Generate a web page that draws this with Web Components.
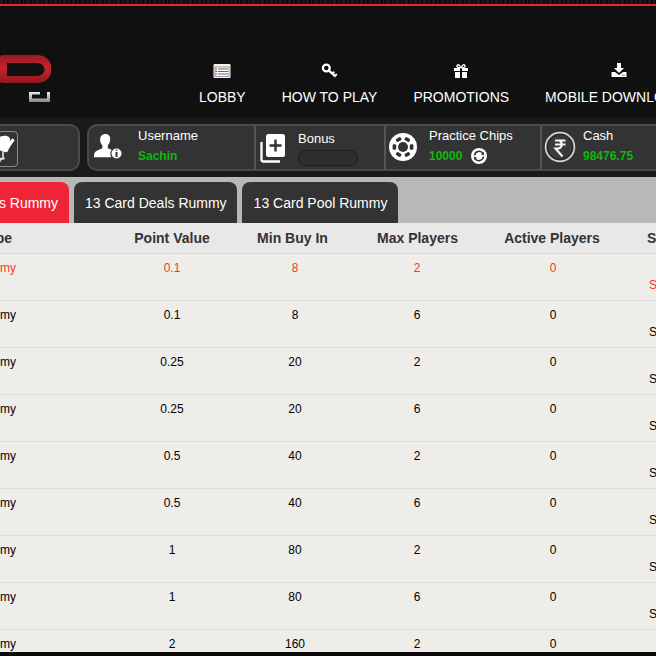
<!DOCTYPE html>
<html lang="en">
<head>
<meta charset="utf-8">
<title>Rummy Lobby</title>
<style>
html,body{margin:0;padding:0;background:#0a0a0a}
body{width:656px;height:656px;overflow:hidden;font-family:"Liberation Sans",Arial,sans-serif}
lobby-page{width:656px;height:656px}
</style>
</head>
<body>
<lobby-page>
  <top-bar slot="top">
    <nav-item label="LOBBY" icon="lobby"></nav-item>
    <nav-item label="HOW TO PLAY" icon="key"></nav-item>
    <nav-item label="PROMOTIONS" icon="gift"></nav-item>
    <nav-item label="MOBILE DOWNLOAD" icon="download" nudge="9"></nav-item>
  </top-bar>
  <status-bar slot="status">
    <status-cell w="167" label="Username" value="Sachin" icon="user"></status-cell>
    <status-cell w="130" label="Bonus" icon="plus" pill></status-cell>
    <status-cell w="156" label="Practice Chips" value="10000" icon="chip" refresh></status-cell>
    <status-cell w="130" label="Cash" value="98476.75" icon="rupee"></status-cell>
  </status-bar>
  <tab-strip slot="tabs">
    <game-tab active>Points Rummy</game-tab>
    <game-tab>13 Card Deals Rummy</game-tab>
    <game-tab>13 Card Pool Rummy</game-tab>
  </tab-strip>
  <lobby-table slot="table"></lobby-table>
</lobby-page>
<script>
const chipBlobs = [30,90,150,210,270,330].map(a => `<rect x="12.3" y="4.6" width="5.4" height="3.6" rx="1.2" transform="rotate(${a} 15 15)"/>`).join('');
const ICONS = {
  lobby:`<svg width="18" height="16" viewBox="0 0 18 16"><rect x="0.5" y="1" width="17" height="14" rx="1" fill="#fbf3df"/><rect x="2" y="4" width="14" height="9.5" fill="#fff" stroke="#5b5478" stroke-width=".6"/><path d="M5 6h10M5 8.500h10M5 11h10" stroke="#6b6080" stroke-width="1.200"/><path d="M2.500 6h1.500M2.500 8.500h1.500M2.500 11h1.500" stroke="#8a2f55" stroke-width="1.200"/></svg>`,
  key:`<svg width="18" height="16" viewBox="0 0 18 16"><circle cx="5.300" cy="5" r="3.400" fill="none" stroke="#fff" stroke-width="2.300"/><path d="M7.600 7.400l7.200 6.200" stroke="#fff" stroke-width="2.400"/><path d="M11.500 10.500l1.800-1.800M14 12.800l1.800-1.800" stroke="#fff" stroke-width="1.800"/></svg>`,
  gift:`<svg width="16" height="16" viewBox="0 0 16 16"><path d="M1 5h6v3H1zM9 5h6v3H9zM2 9h5v6H2zM9 9h5v6H9z" fill="#fff"/><path d="M7.600 4.600C4.500 5 3.600 3.800 4 2.600 4.600 1 6.800 1.600 7.600 4.600zM8.400 4.600c3.100.4 4-.8 3.600-2C11.400 1 9.200 1.600 8.400 4.600z" fill="none" stroke="#fff" stroke-width="1.300"/></svg>`,
  download:`<svg width="16" height="16" viewBox="0 0 16 16"><path d="M6 0h4v5h3l-5 5-5-5h3z" fill="#fff"/><path d="M0.500 9h3.500l4 3 4-3h3.500v5H.5z" fill="#fff"/><path d="M11 12.300h3" stroke="#777" stroke-width="1"/></svg>`,
  user:`<svg width="30" height="28" viewBox="0 0 30 28"><path d="M12.500 2c3.400 0 5 2.700 4.700 5.700-.2 2.500-1.200 4.500-2.400 5.600v3c1.200.6 2.700 1.100 4 1.700-1 1-1.600 2.500-1.500 4.300.04 1.100.4 2 1 3H1c0-3.400.4-5.200 2.300-6.300 2-1.100 4.200-1.600 6-2.700v-3c-1.300-1.200-2-3.200-2.200-5.300C6.800 4.700 9 2 12.500 2z" fill="#fff"/><circle cx="23.500" cy="21.500" r="5" fill="#fff"/><path d="M23.500 20v5" stroke="#333" stroke-width="2"/><path d="M23.500 17.600v1.300" stroke="#333" stroke-width="1.600"/></svg>`,
  plus:`<svg width="26" height="30" viewBox="0 0 26 30"><path d="M1.500 9v17.500a2 2 0 0 0 2 2H20" fill="none" stroke="#fff" stroke-width="2.300"/><rect x="6" y="1" width="19" height="23" rx="2.500" fill="#fff"/><path d="M15.500 6.500v12M9.500 12.500h12" stroke="#333" stroke-width="2.400"/></svg>`,
  chip:`<svg width="30" height="30" viewBox="0 0 30 30"><circle cx="15" cy="15" r="14" fill="#fff"/><g fill="#333">${chipBlobs}</g><circle cx="15" cy="15" r="5" fill="#333"/></svg>`,
  rupee:`<svg width="32" height="32" viewBox="0 0 32 32"><circle cx="16" cy="16" r="14.400" fill="#3a3a3a" stroke="#d4d4d4" stroke-width="1.700"/><circle cx="16" cy="16" r="12.600" fill="none" stroke="#222" stroke-width="1"/><path d="M11 9.500h10.500M11 13.500h10.500M11 9.500h3c5 0 5 8 -.5 8H11.500l7 8" fill="none" stroke="#f6f6f6" stroke-width="2.100"/></svg>`,
  refresh:`<svg width="16" height="16" viewBox="0 0 16 16"><circle cx="8" cy="8" r="8" fill="#fff"/><path d="M3.500 7.500A4.600 4.600 0 0 1 12 5.600" fill="none" stroke="#333" stroke-width="1.500"/><path d="M12.500 8.500A4.600 4.600 0 0 1 4 10.400" fill="none" stroke="#333" stroke-width="1.500"/><path d="M13.300 7.200l-3.300-.6 2.700-2.700zM2.700 8.800l3.300.6-2.700 2.700z" fill="#333"/></svg>`
};

function define(name, css, html, extra = {}) {
  const tpl = document.createElement('template');
  tpl.innerHTML = `<style>${css}</style>${html}`;
  customElements.define(name, class extends HTMLElement {
    constructor() {
      super();
      this.attachShadow({ mode: 'open' }).appendChild(tpl.content.cloneNode(true));
    }
    connectedCallback() { if (extra.init) extra.init(this, this.shadowRoot); }
  });
}

define('lobby-page',
  `:host{display:flex;flex-direction:column;overflow:hidden;color:#000;font-family:"Liberation Sans",Arial,sans-serif}
   .strip{height:4px;flex:none;background:repeating-linear-gradient(90deg,#1a1a1a 0 3px,#0c0c0c 3px 5px,#222 5px 6px,#101010 6px 9px)}
   .rule{height:2px;flex:none;background:#ed2533}
   .table{flex:1;min-height:0;display:block;overflow:hidden}
   .foot{height:4px;flex:none;background:#0b0b0b}`,
  `<div class="strip"></div><div class="rule"></div>
   <slot name="top"></slot><slot name="status"></slot><slot name="tabs"></slot>
   <div class="table"><slot name="table"></slot></div><div class="foot"></div>`);

define('top-bar',
  `:host{display:flex;height:111px;flex:none;background:#101010;overflow:hidden}
   svg{display:block;flex:none;margin-top:49px}
   nav{display:flex;gap:36px;margin-left:148px;padding-top:57px;white-space:nowrap}`,
  `<svg width="51" height="48" viewBox="0 0 51 48">
     <defs><linearGradient id="r" x1="0" y1="0" x2="0" y2="1"><stop offset="0" stop-color="#9d1a22"/><stop offset=".5" stop-color="#c4232c"/><stop offset="1" stop-color="#8f171e"/></linearGradient>
     <linearGradient id="g" x1="0" y1="0" x2="0" y2="1"><stop offset="0" stop-color="#eee"/><stop offset="1" stop-color="#888"/></linearGradient></defs>
     <path fill-rule="evenodd" fill="url(#r)" d="M3 0H37C46 0 51.500 6 51.500 14S46 28 37 28H3C1 28 0 27 0 27V1C0 1 1 0 3 0ZM7 8V21H37C41.500 21 44.500 18 44.500 14.500S41.500 8 37 8Z"/>
     <path fill="url(#g)" d="M29 37h11v2.500H32V43.500h15V37h3v10H29z"/>
   </svg><nav><slot></slot></nav>`);

define('nav-item',
  `:host{display:flex;flex-direction:column;align-items:center;color:#fff;font-size:14px}
   .i{height:16px;display:flex;justify-content:center}
   .l{line-height:16px;margin-top:10px}`,
  `<div class="i"></div><div class="l"></div>`,
  { init(el, r) {
      const i = r.querySelector('.i');
      i.innerHTML = ICONS[el.getAttribute('icon')];
      if (el.hasAttribute('nudge')) i.style.paddingLeft = el.getAttribute('nudge') + 'px';
      r.querySelector('.l').textContent = el.getAttribute('label');
  } });

define('status-bar',
  `:host{display:flex;height:60px;flex:none;background:#1a1a1a;box-sizing:border-box;padding-top:7px;gap:7px;margin-left:-40px;width:696px;overflow:hidden}
   .card{box-sizing:border-box;height:47px;background:#333;border:2px solid #4a4a4a;border-radius:10px;flex:none}
   .first{width:120px;display:flex;justify-content:flex-end;padding:5px 60px 0 0}
   .box{width:30px;height:36px;border:1px solid #8a8a8a;border-radius:4px;box-sizing:border-box;display:block}
   .rest{flex:1;min-width:0;display:flex;border-right:0;border-radius:10px 0 0 10px;width:600px}`,
  `<div class="card first"><svg class="box" viewBox="0 0 30 36"><path d="M6 9c4-5 13-7 16-3 1 1.500 1 3 0 4.500l3-4 2.500 2-5 7c-1 2-2 4-3 6-4 0-8-1-10.500-5C7 13 4.500 12 6 9z" fill="#fff"/><path d="M15 21v7" stroke="#ddd" stroke-width="1.800" fill="none"/><path d="M8 28h9M8 31l9-3M8 31h5" stroke="#e4e4e4" stroke-width="1.300" fill="none"/></svg></div>
   <div class="card rest"><slot></slot></div>`);

define('status-cell',
  `:host{display:flex;flex:none;box-sizing:border-box;height:100%;border-right:2px solid #555;color:#fff;font-size:13px;position:relative}
   :host(:last-child){border-right:0}
   .ic{flex:none;display:flex;align-items:center;justify-content:flex-start;box-sizing:border-box}
   .t{line-height:16px;white-space:nowrap}
   .v{color:#0fb80f;font-weight:700;font-size:12px;line-height:16px;margin-top:4px;display:flex;align-items:center;gap:9px}
   .p{display:block;width:60px;height:16px;box-sizing:border-box;background:#2e2e2e;border:1px solid #1e1e1e;border-radius:8px;margin-top:3px}`,
  `<div class="ic"></div><div class="b"><div class="t"></div><div class="v"></div></div>`,
  { init(el, r) {
      const icon = el.getAttribute('icon');
      const cfg = { user:[4,45,2,4], plus:[4,38,5,0], chip:[2,41,2,2], rupee:[2,39,2,2] }[icon];
      const ic = r.querySelector('.ic'), b = r.querySelector('.b'), v = r.querySelector('.v');
      el.style.width = el.getAttribute('w') + 'px';
      ic.innerHTML = ICONS[icon];
      ic.style.cssText = `margin-left:${cfg[0]}px;width:${cfg[1]}px;padding-bottom:${cfg[3]}px;`;
      b.style.paddingTop = cfg[2] + 'px';
      r.querySelector('.t').textContent = el.getAttribute('label');
      if (el.hasAttribute('pill')) { v.remove(); const p = document.createElement('span'); p.className = 'p'; b.appendChild(p); return; }
      const s = document.createElement('span'); s.textContent = el.getAttribute('value'); v.appendChild(s);
      if (el.hasAttribute('refresh')) { const x = document.createElement('span'); x.style.display = 'flex'; x.innerHTML = ICONS.refresh; v.appendChild(x); }
  } });

define('tab-strip',
  `:host{display:flex;flex:none;height:46px;box-sizing:border-box;padding-top:5px;gap:5px;background:#b8b8b8;overflow:hidden}
   div{display:flex;gap:5px;margin-left:-100px}`,
  `<div><slot></slot></div>`);

define('game-tab',
  `:host{display:flex;align-items:center;justify-content:flex-end;height:41px;box-sizing:border-box;padding:0 10px 0 11px;background:#333;color:#fff;font-size:14px;border-radius:8px 8px 0 0;white-space:nowrap;flex:none}
   :host(:last-child){padding:0 11px 0 12px}
   :host([active]){background:#ed2536;width:169px;padding-right:11px}`,
  `<slot></slot>`);

const HEAD = '151px 122px 119px 131px 138px 60px';
const BODY = '151px 122px 124px 120px 152px 60px';
const ROWS = [['0.1','8','2'],['0.1','8','6'],['0.25','20','2'],['0.25','20','6'],['0.5','40','2'],['0.5','40','6'],['1','80','2'],['1','80','6'],['2','160','2']];

define('lobby-table',
  `:host{display:block;margin-left:-40px;width:696px;background:#eeede9;height:429px;overflow:hidden;font-size:12px}
   .r{display:grid;box-sizing:border-box;text-align:center;white-space:nowrap}
   .h{grid-template-columns:${HEAD};height:31px;background:#e8e8e9;border-bottom:1px solid #d8d8d8;font-weight:700;font-size:14px;color:#333;line-height:30px}
   .d{grid-template-columns:${BODY};height:47px;border-bottom:1px solid #dcdcdc;padding-top:6px;line-height:17px;color:#000}
   .d.on{color:#f8362c}
   .c0{text-align:right;padding-right:95px}
   .h .c0{padding-right:99px}
   .s{text-align:left;padding-left:20px;padding-top:17px}
   .h .s{padding:0 0 0 26px}`,
  `<div id="t"></div>`,
  { init(el, r) {
      const t = r.getElementById('t');
      const row = (cls, cells) => {
        const d = document.createElement('div'); d.className = cls;
        cells.forEach((c, i) => { const s = document.createElement('div'); s.textContent = c; if (i === 0) s.className = 'c0'; if (i === 5) s.className = 's'; d.appendChild(s); });
        t.appendChild(d);
      };
      row('r h', ['Type','Point Value','Min Buy In','Max Players','Active Players','S']);
      ROWS.forEach((x, i) => row('r d' + (i === 0 ? ' on' : ''), ['Rummy', x[0], x[1], x[2], '0', 'S']));
  } });
</script>
</body>
</html>
